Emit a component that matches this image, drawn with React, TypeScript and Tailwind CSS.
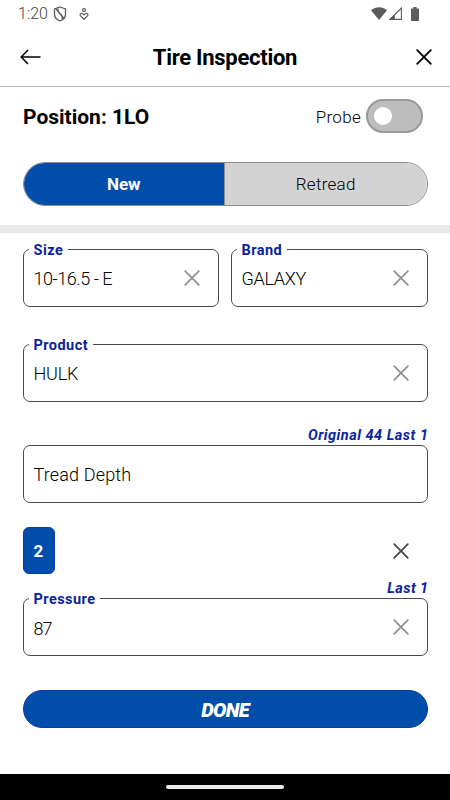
import type { ReactNode } from "react";

function Cross({ className = "" }: { className?: string }) {
  return (
    <svg viewBox="0 0 16 16" className={className} fill="none" stroke="currentColor" strokeLinecap="round">
      <path d="M1.2 1.2 14.8 14.8M14.8 1.2 1.2 14.8" />
    </svg>
  );
}

function Field({ label, children, clearable = true, className = "" }: { label?: ReactNode; children: ReactNode; clearable?: boolean; className?: string }) {
  return (
    <div className={`relative flex h-[58px] items-center justify-between rounded-[7px] border border-[#4a4a4a] pl-[10px] pr-[17.5px] ${className}`}>
      {label && (
        <span className="absolute -top-[8px] left-[5px] flex h-[18px] items-center bg-white px-[5px] text-[14.5px] font-bold leading-none tracking-[0.45px] text-[#0a259c]">
          {label}
        </span>
      )}
      <span className="pt-[2px] text-[18px] font-light leading-none text-black">{children}</span>
      {clearable && <Cross className="h-4 w-4 stroke-[1.7] text-[#8f8f8f]" />}
    </div>
  );
}

export default function App() {
  return (
    <div className="flex h-[800px] w-[450px] flex-col overflow-hidden bg-white font-['Roboto',sans-serif] text-black">
      <div className="flex h-[27px] shrink-0 items-center justify-between pl-[18px] pr-[31px] text-[#5c5c5c]">
        <div className="flex items-center">
          <span className="text-[16px] font-light leading-none text-[#444]">1:20</span>
          <svg viewBox="0 0 14 16" className="ml-[5px] h-4 w-[14px]" fill="none" stroke="currentColor" strokeWidth="1.3">
            <path d="M7 1 12.5 3V8C12.5 11.5 10 13.8 7 14.8 4 13.8 1.5 11.5 1.5 8V3Z" />
            <path d="M3 3.2 11 12.5M5 2.5C4.5 6 6 7 8 8.5S9.5 11.5 9 13.2" />
          </svg>
          <svg viewBox="0 0 10 12" className="ml-[12px] h-3 w-[10px]" fill="none" stroke="currentColor" strokeWidth="1.2">
            <circle cx="5" cy="2.1" r="1.5" />
            <path d="M5 11.2 1.3 7.7C.2 5.7 2.7 4.3 5 6.9 7.3 4.3 9.8 5.7 8.7 7.7Z" />
          </svg>
        </div>
        <div className="flex items-center">
          <svg viewBox="0 0 16 13" className="h-[13px] w-4" fill="currentColor">
            <path d="M0 3.2C4.6-.8 11.4-.8 16 3.2L8 13Z" />
          </svg>
          <svg viewBox="0 0 13 13" className="ml-[2px] h-[13px] w-[13px]">
            <path d="M1 12.4H12.4V1Z" fill="none" stroke="currentColor" strokeWidth="1.1" />
            <path d="M0 13H5.8V7.2Z" fill="currentColor" />
          </svg>
          <svg viewBox="0 0 8 14" className="ml-[9px] h-[14px] w-2" fill="currentColor">
            <path d="M2.4 0h3.2v1.4H7.2q.8 0 .8.8V13.2q0 .8-.8.8H.8Q0 14 0 13.2V2.2q0-.8.8-.8H2.4Z" />
          </svg>
        </div>
      </div>

      <header className="flex h-[60px] shrink-0 items-center justify-between border-b border-[#b5b5b5] pl-5 pr-[18px]">
        <svg viewBox="0 0 22 16" className="h-4 w-[22px]" fill="none" stroke="currentColor" strokeWidth="1.5">
          <path d="M8 1 1.2 8 8 15M1.2 8H20.5" />
        </svg>
        <h1 className="pr-[8px] pt-[3px] text-[22px] font-bold leading-none tracking-[-0.28px]">Tire Inspection</h1>
        <Cross className="h-4 w-4 stroke-[1.8]" />
      </header>

      <div className="flex h-[58px] shrink-0 items-center justify-between pl-[23px] pr-[27px]">
        <span className="pt-[2px] text-[21px] font-bold leading-none">Position: 1LO</span>
        <div className="flex items-center">
          <span className="mr-[5px] pt-[2px] text-[17px] font-light leading-none tracking-[0.3px]">Probe</span>
          <div className="flex h-[34px] w-[57px] items-center rounded-full border-2 border-[#999] bg-[#bdbdbd] pl-[6px]">
            <div className="h-[18px] w-[18px] rounded-full bg-white" />
          </div>
        </div>
      </div>

      <div className="mx-[22.5px] mt-[17px] flex h-[44px] shrink-0 overflow-hidden rounded-full border border-[#8d8d8d] text-[17px]">
        <div className="flex w-[201.5px] items-center justify-center border-r border-[#8d8d8d] bg-[#004eaa] pt-[2px] font-bold text-white">New</div>
        <div className="flex flex-1 items-center justify-center bg-[#d3d3d3] pt-[2px] font-light tracking-[0.3px]">Retread</div>
      </div>
      <div className="mt-[19px] h-[8px] shrink-0 bg-[#e8e8e8]" />

      <main className="flex flex-col px-[22.5px] pt-[16px]">
        <div className="flex gap-[12px]">
          <Field label="Size" className="w-[196px]"><span className="tracking-[-0.45px]">10-16.5 - E</span></Field>
          <Field label="Brand" className="flex-1"><span className="tracking-[-0.3px]">GALAXY</span></Field>
        </div>
        <Field label="Product" className="mt-[37px]"><span className="tracking-[-0.2px]">HULK</span></Field>
        <div className="-mr-px mt-[25px] flex h-[18px] items-center justify-end text-[14.5px] font-bold italic leading-none tracking-[0.5px] text-[#0a259c]">Original 44 Last 1</div>
        <Field clearable={false}><span className="tracking-[0.15px]">Tread Depth</span></Field>
        <div className="mt-[24px] flex h-[47px] items-center justify-between pr-[18.5px]">
          <div className="flex h-full w-[32px] items-center justify-center rounded-[6px] border border-[#0a3bab] bg-[#004eaa] pt-[2px] text-[17px] font-bold text-white">2</div>
          <Cross className="h-4 w-4 stroke-[1.7] text-[#444]" />
        </div>
        <div className="-mr-px mt-[6px] flex h-[18px] items-center justify-end text-[14.5px] font-bold italic leading-none tracking-[0.4px] text-[#0a259c]">Last 1</div>
        <Field label="Pressure"><span className="inline-block pt-[2px] tracking-[-0.9px]">87</span></Field>
        <button className="mt-[34px] flex h-[38px] items-center justify-center rounded-full border border-[#0a3bab] bg-[#004eaa] pt-[2px] text-[20px] font-black italic leading-none tracking-[-0.7px] text-white">DONE</button>
      </main>

      <div className="mt-auto flex h-[26px] shrink-0 justify-center bg-black pt-[11px]">
        <div className="h-[4px] w-[118px] rounded-full bg-[#e8e8e8]" />
      </div>
    </div>
  );
}
